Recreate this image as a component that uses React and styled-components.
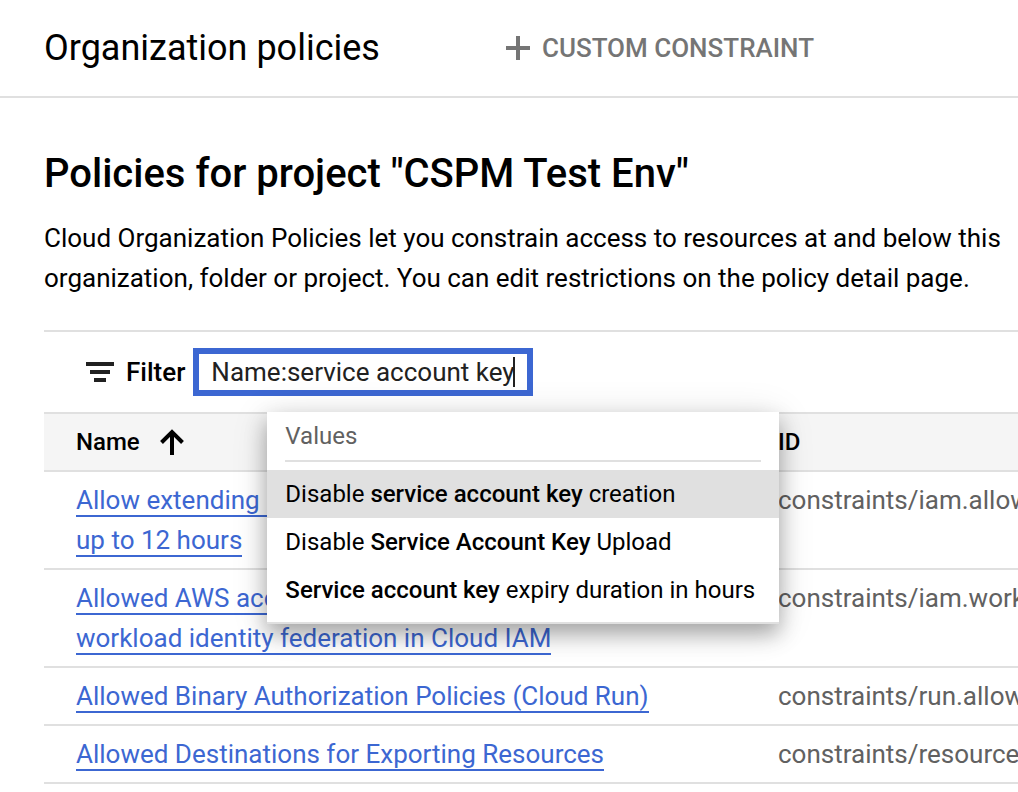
import React, { useState } from "react";
import styled, { createGlobalStyle } from "styled-components";

const GlobalStyle = createGlobalStyle`
  *, *::before, *::after { box-sizing: border-box; }
  body {
    margin: 0;
    background: #fff;
    color: #000;
    font-family: Roboto, "Liberation Sans", sans-serif;
    font-size: 26px;
    line-height: 40px;
    overflow-x: hidden;
  }
`;

const line = "#e0e0e0";
const blue = "#3c67d2";

const TopBar = styled.header`
  display: flex;
  align-items: center;
  gap: 126px;
  height: 98px;
  padding-left: 44px;
  border-bottom: 2px solid ${line};
`;

const PageTitle = styled.h1`
  margin: 0;
  font-size: 36px;
  font-weight: 400;
  white-space: nowrap;
`;

const ActionButton = styled.button`
  display: flex;
  align-items: center;
  gap: 12px;
  padding: 0;
  border: 0;
  background: none;
  color: #757575;
  font: 500 26px/40px Roboto, "Liberation Sans", sans-serif;
  white-space: nowrap;
`;

const Main = styled.main`
  padding: 52px 0 0 44px;
`;

const Heading = styled.h2`
  margin: 0;
  font-size: 40px;
  line-height: 48px;
  font-weight: 500;
`;

const Intro = styled.p`
  margin: 20px 0 32px;
  padding-right: 12px;
`;

const FilterBar = styled.div`
  display: flex;
  align-items: center;
  height: 82px;
  padding-left: 42px;
  border-top: 2px solid ${line};
`;

const FilterLabel = styled.label`
  display: flex;
  align-items: center;
  gap: 12px;
  margin-right: 8px;
  font-weight: 500;
`;

const Field = styled.div`
  position: relative;
  display: flex;
  align-items: center;
  height: 48px;
  padding: 0 12px;
  border: 6px solid ${blue};
`;

const FilterInput = styled.input`
  field-sizing: content;
  padding: 0;
  border: 0;
  outline: 0;
  background: none;
  color: #212121;
  caret-color: transparent;
  font: 400 26px/32px Roboto, "Liberation Sans", sans-serif;
`;

const Caret = styled.span`
  width: 2px;
  height: 30px;
  margin-left: -2px;
  background: #212121;
`;

const Popup = styled.div`
  position: absolute;
  z-index: 1;
  top: calc(100% + 22px);
  left: 68px;
  width: 512px;
  padding-bottom: 8px;
  border-bottom: 2px solid ${line};
  background: #fff;
  box-shadow:
    0 10px 20px rgba(0, 0, 0, 0.3),
    0 4px 36px rgba(0, 0, 0, 0.12);
  font-size: 24px;
  line-height: 48px;
  white-space: nowrap;
`;

const PopupTitle = styled.div`
  margin: 0 18px 8px;
  border-bottom: 2px solid ${line};
  color: #616161;
`;

const Options = styled.ul`
  margin: 0;
  padding: 0;
  list-style: none;
`;

const Option = styled.li`
  padding: 0 18px;
  background: ${(p) => (p.$active ? line : "transparent")};

  b { font-weight: 500; }
`;

const TableClip = styled.div`
  overflow: hidden;
`;

const Table = styled.table`
  width: 100%;
  table-layout: fixed;
  border-collapse: separate;
  border-spacing: 0;
`;

const HeadCell = styled.th`
  width: ${(p) => p.$width || "auto"};
  height: 60px;
  padding: 0 0 0 ${(p) => (p.$first ? 32 : 16)}px;
  border: solid ${line};
  border-width: 2px 0;
  background: #f5f5f5;
  font-size: 24px;
  font-weight: 500;
  text-align: left;
`;

const SortLabel = styled.span`
  display: flex;
  align-items: center;
  gap: 20px;
`;

const Cell = styled.td`
  padding: ${(p) => (p.$first ? "8px 48px 8px 32px" : "8px 16px")};
  border-bottom: 2px solid ${line};
  color: #616161;
  vertical-align: top;
  white-space: ${(p) => (p.$first ? "normal" : "nowrap")};
`;

const PolicyLink = styled.a`
  border-bottom: 2px solid ${blue};
  color: ${blue};
  text-decoration: none;
`;

const PlusIcon = () => (
  <svg width="24" height="24" viewBox="0 0 24 24" fill="currentColor" aria-hidden="true">
    <path d="M10 0h4v10h10v4H14v10h-4V14H0v-4h10z" />
  </svg>
);

const FilterIcon = () => (
  <svg width="28" height="20" viewBox="0 0 28 20" fill="#212121" aria-hidden="true">
    <path d="M0 0h28v4H0zM4 8h20v4H4zM8 16h12v4H8z" />
  </svg>
);

const ArrowUpIcon = () => (
  <svg width="24" height="26" viewBox="0 0 24 26" fill="none" stroke="#000" strokeWidth="4" aria-hidden="true">
    <path d="M12 26V3M1.5 13.500 12 3l10.500 10.500" />
  </svg>
);

const suggestions = [
  ["Disable ", "service account key", " creation"],
  ["Disable ", "Service Account Key", " Upload"],
  ["", "Service account key", " expiry duration in hours"],
];

const policies = [
  ["Allow extending lifetime of OAuth 2.0 access tokens to up to 12 hours", "constraints/iam.allowServiceAccountCredentialLifetimeExtension"],
  ["Allowed AWS accounts that can be configured for workload identity federation in Cloud IAM", "constraints/iam.workloadIdentityPoolAwsAccounts"],
  ["Allowed Binary Authorization Policies (Cloud Run)", "constraints/run.allowedBinaryAuthorizationPolicies"],
  ["Allowed Destinations for Exporting Resources", "constraints/resourcemanager.allowedExportDestinations"],
];

export default function App() {
  const [query, setQuery] = useState("Name:service account key");

  return (
    <>
      <GlobalStyle />
      <TopBar>
        <PageTitle>Organization policies</PageTitle>
        <ActionButton type="button">
          <PlusIcon />
          CUSTOM CONSTRAINT
        </ActionButton>
      </TopBar>
      <Main>
        <Heading>Policies for project "CSPM Test Env"</Heading>
        <Intro>
          Cloud Organization Policies let you constrain access to resources at and below this
          organization, folder or project. You can edit restrictions on the policy detail page.
        </Intro>
        <FilterBar>
          <FilterLabel htmlFor="policy-filter">
            <FilterIcon />
            Filter
          </FilterLabel>
          <Field>
            <FilterInput id="policy-filter" value={query} onChange={(e) => setQuery(e.target.value)} />
            <Caret />
            <Popup>
              <PopupTitle>Values</PopupTitle>
              <Options>
                {suggestions.map(([before, match, after], i) => (
                  <Option key={match + after} $active={i === 0}>
                    {before}
                    <b>{match}</b>
                    {after}
                  </Option>
                ))}
              </Options>
            </Popup>
          </Field>
        </FilterBar>
        <TableClip>
          <Table>
            <thead>
              <tr>
                <HeadCell $first $width="718px" scope="col">
                  <SortLabel>
                    Name
                    <ArrowUpIcon />
                  </SortLabel>
                </HeadCell>
                <HeadCell scope="col">ID</HeadCell>
              </tr>
            </thead>
            <tbody>
              {policies.map(([name, id]) => (
                <tr key={id}>
                  <Cell $first>
                    <PolicyLink href="#policy">{name}</PolicyLink>
                  </Cell>
                  <Cell>{id}</Cell>
                </tr>
              ))}
            </tbody>
          </Table>
        </TableClip>
      </Main>
    </>
  );
}
